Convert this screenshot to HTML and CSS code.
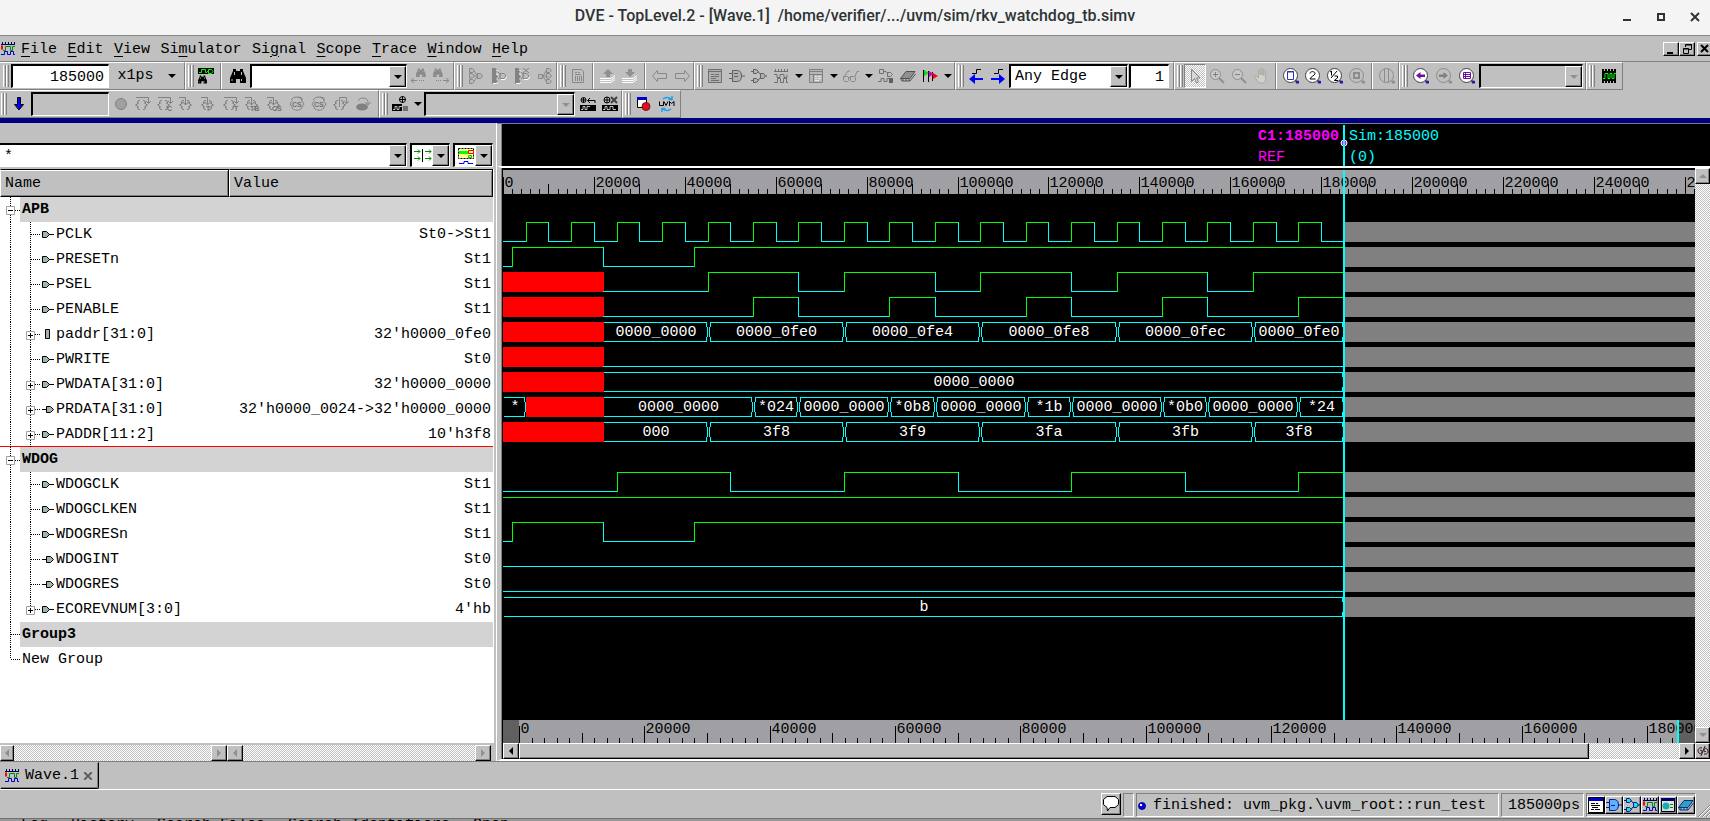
FILE: index.html
```html
<!DOCTYPE html>
<html lang="en">
<head>
<meta charset="utf-8">
<title>DVE - TopLevel.2 - [Wave.1]</title>
<link rel="stylesheet" href="styles.css">
</head>
<body>
<svg class="defs" aria-hidden="true">
  <symbol id="i-wave" viewBox="0 0 16 16"><path d="M1 3.500h14M2.500 1v2M5.500 1v2M8.500 1v2M11.500 1v2M14.500 1v2" stroke="#000050" fill="none"/><path d="M1 4.500h2v4H1z" fill="#f00"/><path d="M3 9.500h2.500v-4h5v4h2v-4h2.500" stroke="#080" fill="none"/><path d="M1 13.500h3.500v-3h3v3h3v-3h3v3H15" stroke="#00c" fill="none"/></symbol>
  <symbol id="i-findsig" viewBox="0 0 16 16"><path d="M0 0h16v6H0z" fill="#000"/><path d="M1 4.500h2.500v-3h4v3H9M9 3.500h1.500M10.500 1.500h3l1.500 2-1.500 2h-3z" stroke="#0f0" fill="none"/><use href="#p-bino" transform="translate(0 7) scale(.56)"/></symbol>
  <symbol id="p-bino" viewBox="0 0 16 16" overflow="visible"><path d="M3 1h3v2h4V1h3v2l3 7v5h-6v-4H6v4H0v-5l3-7z"/><path d="M2 11v2M11.500 11v2M4.500 4v3M11.500 4v3" stroke="#c0c0c0" fill="none"/></symbol>
  <symbol id="i-bino" viewBox="0 0 16 16"><use href="#p-bino" width="16" height="16"/></symbol>
  <symbol id="i-findl" viewBox="0 0 16 16"><use href="#p-bino" transform="translate(5 0) scale(.6)" fill="#888"/><path d="M0 12.500h6M3 10l-3 2.500 3 2.500M8 12.500h1M10 12.500h1M12 12.500h1" stroke="#888" fill="none"/></symbol>
  <symbol id="i-findr" viewBox="0 0 16 16"><use href="#p-bino" transform="translate(0 0) scale(.6)" fill="#888"/><path d="M10 12.500h6M13 10l3 2.500-3 2.500M7 12.500h1M5 12.500h1M3 12.500h1" stroke="#888" fill="none"/></symbol>
  <symbol id="i-drv" viewBox="0 0 16 16"><path d="M1.500 .5h3l2 2-2 2h-3zM1.500 5.500h3l2 2.500-2 2h-3zM1.500 11.500h3l2 2-2 2h-3zM9.500 5.500h3l2 2.500-2 2.500h-3zM6 3l3 4M6 8h3M6 13l3-4" stroke="#888" fill="#b8b8b8"/></symbol>
  <symbol id="i-load" viewBox="0 0 16 16"><path d="M1 0h3l3 2-2 3 2 3-2 3 2 3-2 2H1z" fill="#848484"/><path d="M7 4l3 3.500L7 11M9 5.500h4l2 2.500-2 2.500H9z" stroke="#888" fill="none"/><path d="M5 2l2 1M5 6l2 1M2 15.500h3l2-1M10 11.500h4l2-3" stroke="#fff" fill="none"/></symbol>
  <symbol id="i-loadx" viewBox="0 0 16 16"><use href="#i-load" width="16" height="16"/><path d="M9 0l6 5M15 0L9 5" stroke="#808080" fill="none"/></symbol>
  <symbol id="i-fan" viewBox="0 0 16 16"><path d="M9.500 .5h3l2 2-2 2h-3zM9.500 5.500h3l2 2.500-2 2h-3zM9.500 11.500h3l2 2-2 2h-3zM1.500 6.500h4v4h-4zM6 8l3-5M6 8h3M6 8l3 5" stroke="#888" fill="#b8b8b8"/></symbol>
  <symbol id="i-doc" viewBox="0 0 16 16"><path d="M2.500 1.500h9l2 2v11h-11zM5 4.500h2M8 4.500h2M5 6.500h6M5.500 8v5M7.500 8v5M9.500 8v5M11.500 8v5" stroke="#888" fill="none"/></symbol>
  <symbol id="i-up" viewBox="0 0 16 16"><path d="M8 1l5 5h-3v3H6V6H3z" fill="#909090"/><path d="M0 10.500h11l4-3M0 12.500h11l4-3M0 14.500h11l4-3" stroke="#fff" fill="none"/></symbol>
  <symbol id="i-down" viewBox="0 0 16 16"><path d="M8 9l5-5h-3V1H6v3H3z" fill="#909090"/><path d="M0 10.500h11l4-3M0 12.500h11l4-3M0 14.500h11l4-3" stroke="#fff" fill="none"/></symbol>
  <symbol id="i-back" viewBox="0 0 16 16"><path d="M.5 8l5-5.500v3h9v5h-9v3z" stroke="#888" fill="none"/></symbol>
  <symbol id="i-fwd" viewBox="0 0 16 16"><path d="M15.500 8l-5-5.500v3h-9v5h9v3z" stroke="#888" fill="none"/></symbol>
  <symbol id="i-list" viewBox="0 0 16 16"><path d="M1.500 1.500h13v13h-13z" stroke="#707070" fill="#b0b0b0"/><path d="M2 3.500h12M4 6.500h3M8 6.500h4M4 8.500h8M4 10.500h5M4 12.500h8" stroke="#707070" fill="none"/></symbol>
  <symbol id="i-and" viewBox="0 0 16 16"><path d="M3.500 2.500h5c3 0 4 3 4 5.500s-1 5.500-4 5.500h-5zM0 5.500h3M0 10.500h3M5 5.500h4M5 8.500h4M12.500 8H16" stroke="#606060" fill="#b0b0b0"/></symbol>
  <symbol id="i-sch" viewBox="0 0 16 16"><path d="M2.500 1.500h3l2 2-2 2h-3zM2.500 10.500h3l2 2-2 2h-3zM9.500 5.500h3l2 2.500-2 2.500h-3zM0 3.500h2M0 12.500h2M7 3.500l2.500 3M7 12.500l2.500-3M14 8h2" stroke="#606060" fill="#b0b0b0"/></symbol>
  <symbol id="i-gwave" viewBox="0 0 16 16"><path d="M1 3.500h14M2.500 1v2M5.500 1v2M8.500 1v2M11.500 1v2M14.500 1v2M1 6.500h3v3h3v-3h4v3h3v-3M1 14.500h3.500v-4h3v4h3v-4h3v4H15" stroke="#707070" fill="none"/></symbol>
  <symbol id="i-table" viewBox="0 0 16 16"><path d="M1.500 1.500h13v13h-13zM2 3.500h12M2 6.500h12M5.500 6v8" stroke="#808080" fill="#b8b8b8"/><path d="M7 8.500h2M10 8.500h3M7 10.500h2M10 10.500h3M7 12.500h4" stroke="#e8e8e8" fill="none"/></symbol>
  <symbol id="i-glass" viewBox="0 0 16 16"><path d="M.5 8.500h4l1 1v3l-1 1h-3l-1-1zM7.500 8.500h4l1 1v3l-1 1h-3l-1-1zM5.500 9.500h2M1.500 8l3.500-5h2M12 8.500l2-5h2" stroke="#888" fill="none"/></symbol>
  <symbol id="i-schw" viewBox="0 0 16 16"><path d="M1.500 1.500h4v4h-4zM9.500 4.500h3l2 2-2 2h-3zM6 3.500h2l2 2M0 13.500h3v-3h3v3h3v-3h3" stroke="#707070" fill="none"/><path d="M11 10h4v5h-4z" fill="#606060"/></symbol>
  <symbol id="i-chip" viewBox="0 0 16 16"><path d="M.5 10.500L6 3.500h9L10 10.500z" stroke="#505050" fill="#909090"/><path d="M.5 10.500L2 13h8l5.500-7M3 10.500V13M6 10.500V13M9 10.500V13" stroke="#505050" fill="none"/></symbol>
  <symbol id="i-flags" viewBox="0 0 16 16"><path d="M1.500 2v12M6.500 3v11M10.500 4v9" stroke="#000" fill="none"/><path d="M2 2l5 3-5 3z" fill="#0d0"/><path d="M7 3l5 3-5 3z" fill="#c0c"/><path d="M11 5l5 3-5 3z" fill="#f00"/></symbol>
  <symbol id="i-edgel" viewBox="0 0 16 16"><path d="M4 5.500h4.500v-4H13" stroke="#000" fill="none"/><path d="M1 11l6-5v4h8v2H7v4z" fill="#00f"/></symbol>
  <symbol id="i-edger" viewBox="0 0 16 16"><path d="M4 5.500h4.500v-4H13" stroke="#000" fill="none"/><path d="M15 11L9 6v4H1v2h8v4z" fill="#00f"/></symbol>
  <symbol id="i-ptr" viewBox="0 0 16 16"><path d="M4.500 1.500v12l3-3 2 4.500 2-1-2-4h3.500z" stroke="#888" fill="#d8d8d8"/></symbol>
  <symbol id="i-zin" viewBox="0 0 16 16"><circle cx="6.500" cy="6.500" r="5" stroke="#909090" fill="#c8c8c8"/><path d="M4 6.500h5M6.500 4v5" stroke="#808080"/><path d="M10 10l5 5" stroke="#909090" stroke-width="2"/></symbol>
  <symbol id="i-zout" viewBox="0 0 16 16"><circle cx="6.500" cy="6.500" r="5" stroke="#909090" fill="#c8c8c8"/><path d="M4 6.500h5" stroke="#808080"/><path d="M10 10l5 5" stroke="#909090" stroke-width="2"/></symbol>
  <symbol id="i-hand" viewBox="0 0 16 16"><path d="M5 15L1 9.500c-.8-1.500.8-2 1.600-1L4.500 10V3c0-1.300 1.700-1.300 1.700 0v4-5.500c0-1.300 1.800-1.300 1.800 0V7 2c0-1.300 1.800-1.300 1.800 0v5.500-4c0-1.300 1.800-1.300 1.800 0V11c0 2-1 3-1.600 4z" transform="translate(1)" stroke="#aaa" fill="#d4d0c8"/></symbol>
  <symbol id="p-lens" viewBox="0 0 16 16"><circle cx="7.500" cy="7.500" r="7" stroke="#404040" fill="#fff"/><path d="M12 12l4 1v2.500h-3z" fill="#2020a0"/></symbol>
  <symbol id="p-lensg" viewBox="0 0 16 16"><circle cx="7.500" cy="7.500" r="7" stroke="#8c8c8c" fill="none"/><path d="M12 12l4 1v2.500h-3z" fill="#909090"/></symbol>
  <symbol id="i-zfit" viewBox="0 0 16 16"><use href="#p-lens" width="16" height="16"/><path d="M4.500 3.500h6v8h-6zM4 4h7" stroke="#3030b0" fill="none"/></symbol>
  <symbol id="i-z2" viewBox="0 0 16 16"><use href="#p-lens" width="16" height="16"/><path d="M5 5.500c0-2.500 5-2.500 5 0C10 7.500 5 9 5 11h5.500" stroke="#000" fill="none"/></symbol>
  <symbol id="i-zhalf" viewBox="0 0 16 16"><use href="#p-lens" width="16" height="16"/><path d="M3 4l1.500-1v4.500M4 10l6-7M7.500 8h3v2l-3 2v.5h3.500" stroke="#000" fill="none"/></symbol>
  <symbol id="i-zsel" viewBox="0 0 16 16"><use href="#p-lensg" width="16" height="16"/><path d="M5 5h5v5H5z" stroke="#8c8c8c" stroke-width="2" fill="none"/></symbol>
  <symbol id="i-zcur" viewBox="0 0 16 16"><use href="#p-lensg" width="16" height="16"/><path d="M5.500 1v13M9.500 1v13" stroke="#8c8c8c" fill="none"/></symbol>
  <symbol id="i-zback" viewBox="0 0 16 16"><use href="#p-lens" width="16" height="16"/><path d="M3 7.500L7.500 4v2.500H12v2.500H7.500V11z" fill="#7010a0"/></symbol>
  <symbol id="i-zfwd" viewBox="0 0 16 16"><use href="#p-lensg" width="16" height="16"/><path d="M12 7.500L7.500 4v2.500H3v2.500h4.500V11z" fill="#808080"/></symbol>
  <symbol id="i-zlist" viewBox="0 0 16 16"><use href="#p-lens" width="16" height="16"/><path d="M4.500 4.500h7v6h-7zM4.500 6.500h7M4.500 8.500h7M6.500 4.500v6" stroke="#7010a0" fill="none"/></symbol>
  <symbol id="i-chipw" viewBox="0 0 16 16"><path d="M1 1h14v14H1z"/><path d="M3 2h11M3 14h11" stroke="#c0c0c0" stroke-width="2" stroke-dasharray="1 2"/><path d="M2 10.500h2v-5h3v5h2v-5h2v5h2v-5h2" stroke="#0f0" fill="none"/></symbol>
  <symbol id="i-darrow" viewBox="0 0 16 16"><path d="M6.500 1.500h3v7h3L8 14 3.500 8.500h3z" stroke="#000" fill="#00f"/></symbol>
  <symbol id="i-stop" viewBox="0 0 16 16"><circle cx="8" cy="8" r="5.500" stroke="#808080" fill="#a0a0a0"/></symbol>
  <symbol id="p-br" viewBox="0 0 16 16"><path d="M5 4.500H3.500L2.500 6v2l-2 1 2 1v2l1 1.500H5M8 4.500h1.500l1 1.500v2l2 1-2 1v2l-1 1.500H8" stroke="#808080" fill="none"/><path d="M3.500 5v3M3.500 10v3M9.500 5v3M9.500 10v3" stroke="#a0a0a0" fill="none"/></symbol>
  <symbol id="i-b1" viewBox="0 0 16 16"><use href="#p-br" width="16" height="16"/><path d="M1 1.500h12.500V7M11 5l2.500 2.500L16 5" stroke="#808080" fill="none"/></symbol>
  <symbol id="i-b3" viewBox="0 0 16 16"><use href="#p-br" width="16" height="16"/><path d="M0 1.500h6.500v7M4 6l2.500 3L9 6" stroke="#808080" fill="none"/></symbol>
  <symbol id="i-b8" viewBox="0 0 16 16"><path d="M3.500 4.500L1 8l2.500 4M12.500 4.500L15 8l-2.500 4M2 4c3-4 8-4 11 0M13 12c-3 3-7 3-10 0M9 1l4 1v3" stroke="#848484" fill="none"/></symbol>
  <symbol id="i-b10" viewBox="0 0 16 16"><use href="#p-br" width="16" height="16"/><path d="M6.500 11V1.500h7V7M11 5l2.500 3L16 5" stroke="#848484" fill="none"/></symbol>
  <symbol id="i-b11" viewBox="0 0 16 16"><ellipse cx="7" cy="11" rx="6" ry="3.500" fill="#808080"/><path d="M3 5c2-4 8-4 10 0v3M10 6l3 3 3-3" stroke="#848484" fill="none"/></symbol>
  <symbol id="i-mark" viewBox="0 0 16 16"><circle cx="10.500" cy="3.500" r="3" stroke="#000" fill="none"/><path d="M10.500 0v7M7 3.500h7" stroke="#000"/><path d="M0 8h10v7H0z"/><path d="M1 13.500h2v-3h2v3h2v-3h3" stroke="#c0c0c0" fill="none"/><path d="M11 10h5v5h-5z" fill="#707070"/></symbol>
  <symbol id="i-mback" viewBox="0 0 16 16"><circle cx="3.500" cy="4" r="2.500" stroke="#000" fill="none"/><path d="M1 4h5M3.500 2v5M8 4.500h7V7M10 2L7.500 4.500 10 7" stroke="#000" fill="none"/><path d="M0 9h16v6H0z"/><path d="M1 13.500h2v-3h2v3h2v-3h3" stroke="#c0c0c0" fill="none"/></symbol>
  <symbol id="i-mx" viewBox="0 0 16 16"><circle cx="5" cy="4" r="3" stroke="#000" fill="none"/><path d="M2 4h6M5 1v6" stroke="#000"/><path d="M9 1l6 6M15 1L9 7" stroke="#404040" stroke-width="2"/><path d="M0 9h16v6H0z"/><path d="M1 13.500h2v-3h2v3h3v-3h3v3h3" stroke="#c0c0c0" fill="none"/></symbol>
  <symbol id="i-rec" viewBox="0 0 16 16"><path d="M2.500 1.500h9v10h-9z" stroke="#000" fill="#fff"/><path d="M2 1h10v3H2z" fill="#00c"/><circle cx="11" cy="10.500" r="4" fill="#e01020" stroke="#801010"/></symbol>
  <symbol id="i-uvm" viewBox="0 0 16 16"><path d="M4 3c2-2 6-2 8 0M12 13c-2 2-6 2-8 0M13 0v3.500H9.500M3 16v-3.500h3.500" stroke="#18a0e8" stroke-width="1.500" fill="none"/><path d="M.5 5.500v4h4v-4M5 5.500l2 4 2-4M10.500 10V5.500l2 2 2.500-2V10" stroke="#000" fill="none"/></symbol>
  <symbol id="i-grid" viewBox="0 0 18 16"><path d="M0 3.500h6M4 1.500l2 2-2 2M0 10.500h6M4 8.500l2 2-2 2M11 3.500h6M15 1.500l2 2-2 2M11 10.500h6M15 8.500l2 2-2 2" stroke="#080" fill="none"/><path d="M8.500 1v13" stroke="#000"/></symbol>
  <symbol id="i-sigs" viewBox="0 0 16 16"><path d="M.5.500h15v10H.5z" stroke="#000" stroke-dasharray="2 1" fill="#ff8"/><path d="M1 3h10v3H1z" fill="#0f0"/><path d="M10.500 2.500h5v3h-5z" stroke="#f00" fill="none"/><path d="M10.500 7.500h3v2h-3z" stroke="#0c0" fill="none"/><path d="M1 15.500h5v-2h4v2h5" stroke="#00f" fill="none"/></symbol>
  <symbol id="i-min" viewBox="0 0 12 10"><path d="M2 8h6v2H2z"/></symbol>
  <symbol id="i-rest" viewBox="0 0 12 10"><path d="M4.500 3V.500h6v5H8M4 1h7M2.500 4.500h5v5h-5zM2 5h6" stroke="#000" fill="none"/></symbol>
  <symbol id="i-x" viewBox="0 0 12 10"><path d="M2 1l7 7M9 1L2 8" stroke="#000" stroke-width="2" fill="none"/></symbol>
  <symbol id="i-link" viewBox="0 0 12 12"><path d="M5 3C1 2 0 6 2 8s3-1 3-2-2-1-2 0M7 9c4 1 5-3 3-5S7 5 7 6s2 1 2 0M8 1L4 11" stroke="#301010" fill="none"/></symbol>
  <symbol id="i-balloon" viewBox="0 0 18 18"><path d="M5 1.500h8l3.500 3v5l-3.500 3H8L5.500 16l-.5-3.500-3.500-3v-5z" stroke="#000" fill="#fff"/></symbol>
  <symbol id="i-scons" viewBox="0 0 16 16"><path d="M.500.500h15v15H.500z" stroke="#000" fill="#fff"/><path d="M1 1h14v3H1z" fill="#00c"/><path d="M3 6.500h4M8 6.500h2M3 8.500h9M4 10.500h6M3 12.500h3M7 12.500h5" stroke="#000"/></symbol>
  <symbol id="i-sand" viewBox="0 0 16 16"><path d="M3.500 2.500h5c3 0 4 3 4 5.500s-1 5.500-4 5.500h-5zM0 5.500h3M0 10.500h3M12.500 8H16M5 8.500h4" stroke="#002090" fill="#60b0ff"/></symbol>
  <symbol id="i-ssch" viewBox="0 0 16 16"><path d="M2.500 1.500h3l2 2-2 2h-3zM2.500 10.500h3l2 2-2 2h-3zM9.500 5.500h3l2 2.500-2 2.500h-3zM0 3.500h2M0 12.500h2M7 3.500l2.500 3M7 12.500l2.500-3M14 8h2" stroke="#002090" fill="#20e0e0"/></symbol>
  <symbol id="i-stab" viewBox="0 0 16 16"><path d="M1.500 1.500h13v13h-13z" stroke="#000" fill="#e0e0e0"/><path d="M1 1h14v3H1z" fill="#006"/><circle cx="6" cy="9" r="3.500" fill="#10b0b0"/><path d="M10 7.500h3M10 10.500h3" stroke="#080"/></symbol>
  <symbol id="i-schip" viewBox="0 0 16 16"><path d="M.5 10.500L6 3.500h9L10 10.500z" stroke="#003080" fill="#30a0c0"/><path d="M.5 10.500L2 13h8l5.500-7M3 10.500V13M6 10.500V13M9 10.500V13" stroke="#003080" fill="none"/></symbol>

  <!-- tree gutter: dotted branches, expander boxes, port glyphs -->
  <symbol id="p-leaf" viewBox="0 0 56 25"><path d="M10.500 0v25M30.500 0v25M31 12.500h9" class="dots"/></symbol>
  <symbol id="p-plus" viewBox="0 0 56 25"><path d="M26.500 9.500h8v8h-8z" stroke="#a0a0a0" fill="#fff"/><path d="M28 13.500h5M30.500 11v5" stroke="#000"/></symbol>
  <symbol id="p-in" viewBox="0 0 56 25"><path d="M42.500 9.500h4l3 3-3 3h-4zM49 12.500h5" stroke="#000" fill="#a0b4a8"/></symbol>
  <symbol id="p-out" viewBox="0 0 56 25"><path d="M46.500 9.500h4l3 3-3 3h-4zM42 12.500h5" stroke="#000" fill="#a0b4a8"/></symbol>
  <symbol id="t-in" viewBox="0 0 56 25"><use href="#p-leaf" width="56" height="25"/><use href="#p-in" width="56" height="25"/></symbol>
  <symbol id="t-out" viewBox="0 0 56 25"><use href="#p-leaf" width="56" height="25"/><use href="#p-out" width="56" height="25"/></symbol>
  <symbol id="t-inp" viewBox="0 0 56 25"><use href="#t-in" width="56" height="25"/><use href="#p-plus" width="56" height="25"/></symbol>
  <symbol id="t-inlast" viewBox="0 0 56 25"><path d="M10.500 0v25M30.500 0v12M31 12.500h9" class="dots"/><use href="#p-in" width="56" height="25"/><use href="#p-plus" width="56" height="25"/></symbol>
  <symbol id="t-outp" viewBox="0 0 56 25"><use href="#t-out" width="56" height="25"/><use href="#p-plus" width="56" height="25"/></symbol>
  <symbol id="t-regp" viewBox="0 0 56 25"><use href="#p-leaf" width="56" height="25"/><use href="#p-plus" width="56" height="25"/><path d="M45.500 7.500h4v9h-4z" stroke="#000" fill="#a0b4a8"/></symbol>
  <symbol id="t-group" viewBox="0 0 20 25"><path d="M10.500 0v25M11 13.500h9" class="dots"/><path d="M6.500 9.500h8v8h-8z" stroke="#a0a0a0" fill="#fff"/><path d="M8 13.500h5" stroke="#000"/></symbol>
  <symbol id="t-empty" viewBox="0 0 20 25"><path d="M10.500 0v25M11 12.500h9" class="dots"/></symbol>
  <symbol id="t-last" viewBox="0 0 20 25"><path d="M10.500 0v12M11 12.500h9" class="dots"/></symbol>
</svg>

<header class="titlebar">
  <h1>DVE - TopLevel.2 - [Wave.1]&nbsp; /home/verifier/.../uvm/sim/rkv_watchdog_tb.simv</h1>
  <div class="winbtns">
    <button aria-label="Minimize"><svg viewBox="0 0 10 10"><path d="M1 7h8v2H1z"/></svg></button>
    <button aria-label="Maximize"><svg viewBox="0 0 10 10"><path d="M2 2h6v6H2z" stroke="#2e3436" stroke-width="2" fill="none"/></svg></button>
    <button aria-label="Close"><svg viewBox="0 0 10 10"><path d="M1 1l8 8M9 1L1 9" stroke="#2e3436" stroke-width="2"/></svg></button>
  </div>
</header>

<nav class="menubar">
  <svg class="ico"><use href="#i-wave"/></svg>
  <div class="menus">
    <button><u>F</u>ile</button><button><u>E</u>dit</button><button><u>V</u>iew</button><button>Si<u>m</u>ulator</button><button>Si<u>g</u>nal</button><button><u>S</u>cope</button><button><u>T</u>race</button><button><u>W</u>indow</button><button><u>H</u>elp</button>
  </div>
  <div class="mdi">
    <button class="bevel" aria-label="Minimize view"><svg><use href="#i-min"/></svg></button>
    <button class="bevel" aria-label="Restore view"><svg><use href="#i-rest"/></svg></button>
    <button class="bevel last" aria-label="Close view"><svg><use href="#i-x"/></svg></button>
  </div>
</nav>

<div class="toolbar">
  <div class="group g-time"><i class="grip"></i>
    <input class="field time" aria-label="Time" value="185000"><button class="unit">x1ps<b class="tri"></b></button></div>
  <div class="group g-find"><i class="grip"></i>
    <button class="tool" aria-label="Find signal"><svg class="ico"><use href="#i-findsig"/></svg></button><i class="sep"></i>
    <button class="tool w25" aria-label="Find"><svg class="ico"><use href="#i-bino"/></svg></button>
    <span class="combo find"><select aria-label="Find text"><option></option></select></span>
    <button class="tool" aria-label="Find previous"><svg class="ico"><use href="#i-findl"/></svg></button>
    <button class="tool" aria-label="Find next"><svg class="ico"><use href="#i-findr"/></svg></button></div>
  <div class="group g-trace"><i class="grip"></i>
    <button class="tool w23" aria-label="Drivers"><svg class="ico"><use href="#i-drv"/></svg></button>
    <button class="tool w23" aria-label="Loads"><svg class="ico"><use href="#i-load"/></svg></button>
    <button class="tool w23" aria-label="Clear loads"><svg class="ico"><use href="#i-loadx"/></svg></button>
    <button class="tool w23" aria-label="Fan out"><svg class="ico"><use href="#i-fan"/></svg></button></div>
  <div class="group g-nav"><i class="grip"></i>
    <button class="tool" aria-label="Source"><svg class="ico"><use href="#i-doc"/></svg></button><i class="sep"></i>
    <button class="tool" aria-label="Scope up"><svg class="ico"><use href="#i-up"/></svg></button>
    <button class="tool" aria-label="Scope down"><svg class="ico"><use href="#i-down"/></svg></button><i class="sep"></i>
    <button class="tool" aria-label="Back"><svg class="ico"><use href="#i-back"/></svg></button>
    <button class="tool" aria-label="Forward"><svg class="ico"><use href="#i-fwd"/></svg></button></div>
  <div class="group g-views"><i class="grip"></i>
    <button class="tool" aria-label="List"><svg class="ico"><use href="#i-list"/></svg></button>
    <button class="tool" aria-label="Schematic"><svg class="ico"><use href="#i-and"/></svg></button>
    <button class="tool" aria-label="Path schematic"><svg class="ico"><use href="#i-sch"/></svg></button>
    <button class="tool" aria-label="Wave"><svg class="ico"><use href="#i-gwave"/></svg></button><button class="drop" aria-label="Wave menu"><b class="tri"></b></button>
    <button class="tool" aria-label="Table"><svg class="ico"><use href="#i-table"/></svg></button><button class="drop" aria-label="Table menu"><b class="tri"></b></button>
    <button class="tool" aria-label="Watch"><svg class="ico"><use href="#i-glass"/></svg></button><button class="drop" aria-label="Watch menu"><b class="tri"></b></button>
    <button class="tool" aria-label="Schematic wave"><svg class="ico"><use href="#i-schw"/></svg></button>
    <button class="tool" aria-label="Memory"><svg class="ico"><use href="#i-chip"/></svg></button>
    <button class="tool" aria-label="Markers"><svg class="ico"><use href="#i-flags"/></svg></button><button class="drop" aria-label="Markers menu"><b class="tri"></b></button></div>
  <div class="group g-edge"><i class="grip"></i>
    <button class="tool" aria-label="Previous edge"><svg class="ico"><use href="#i-edgel"/></svg></button>
    <button class="tool" aria-label="Next edge"><svg class="ico"><use href="#i-edger"/></svg></button>
    <span class="combo edge"><select aria-label="Edge"><option>Any Edge</option></select></span>
    <input class="field count" aria-label="Edge count" value="1"></div>
  <div class="group g-zoom"><i class="grip"></i>
    <button class="tool pressed" aria-label="Select"><svg class="ico"><use href="#i-ptr"/></svg></button>
    <button class="tool" aria-label="Zoom in"><svg class="ico"><use href="#i-zin"/></svg></button>
    <button class="tool" aria-label="Zoom out"><svg class="ico"><use href="#i-zout"/></svg></button>
    <button class="tool" aria-label="Pan"><svg class="ico"><use href="#i-hand"/></svg></button><i class="sep"></i>
    <button class="tool" aria-label="Zoom fit"><svg class="ico"><use href="#i-zfit"/></svg></button>
    <button class="tool" aria-label="Zoom 2x"><svg class="ico"><use href="#i-z2"/></svg></button>
    <button class="tool" aria-label="Zoom half"><svg class="ico"><use href="#i-zhalf"/></svg></button>
    <button class="tool" aria-label="Zoom selection"><svg class="ico"><use href="#i-zsel"/></svg></button><i class="sep"></i>
    <button class="tool" aria-label="Zoom cursors"><svg class="ico"><use href="#i-zcur"/></svg></button></div>
  <div class="group g-hist"><i class="grip"></i>
    <button class="tool w23" aria-label="Zoom back"><svg class="ico"><use href="#i-zback"/></svg></button>
    <button class="tool w23" aria-label="Zoom forward"><svg class="ico"><use href="#i-zfwd"/></svg></button>
    <button class="tool w23" aria-label="Zoom list"><svg class="ico"><use href="#i-zlist"/></svg></button>
    <span class="combo off hist"><select aria-label="Zoom history" disabled><option></option></select></span></div>
  <div class="group g-one"><i class="grip"></i>
    <button class="tool w25" aria-label="Wave chip"><svg class="ico"><use href="#i-chipw"/></svg></button></div>
</div>

<div class="toolbar">
  <div class="group g-sim"><i class="grip"></i>
    <button class="tool" aria-label="Continue"><svg class="ico"><use href="#i-darrow"/></svg></button>
    <input class="field step" aria-label="Run time" disabled>
    <button class="tool" aria-label="Stop"><svg class="ico"><use href="#i-stop"/></svg></button>
    <button class="tool" aria-label="Step over"><svg class="ico"><use href="#i-b1"/></svg></button>
    <button class="tool" aria-label="Step over C"><svg class="ico"><use href="#i-b1"/><text x="10" y="15" class="tiny">C</text></svg></button>
    <button class="tool" aria-label="Step"><svg class="ico"><use href="#i-b3"/></svg></button>
    <button class="tool" aria-label="Step thread"><svg class="ico"><use href="#i-b3"/><text x="5" y="15" class="tiny">T</text></svg></button>
    <button class="tool" aria-label="Next thread"><svg class="ico"><use href="#i-b1"/><text x="11" y="15" class="tiny">T</text></svg></button>
    <button class="tool" aria-label="Step testbench"><svg class="ico"><use href="#i-b3"/><text x="5" y="15" class="tiny">TB</text></svg></button>
    <button class="tool" aria-label="Step constraint"><svg class="ico"><use href="#i-b3"/><text x="5" y="15" class="tiny">CS</text></svg></button>
    <button class="tool" aria-label="Loop constraint"><svg class="ico"><use href="#i-b8"/><text x="3" y="11" class="tiny">CS</text></svg></button>
    <button class="tool" aria-label="Loop all"><svg class="ico"><use href="#i-b8"/><text x="3" y="11" class="tiny">CS</text></svg></button>
    <button class="tool" aria-label="Step out"><svg class="ico"><use href="#i-b10"/></svg></button>
    <button class="tool" aria-label="Skip"><svg class="ico"><use href="#i-b11"/></svg></button></div>
  <div class="group g-sess"><i class="grip"></i>
    <button class="tool" aria-label="Marker search"><svg class="ico"><use href="#i-mark"/></svg></button><button class="drop" aria-label="Marker search menu"><b class="tri"></b></button>
    <span class="combo off sess"><select aria-label="Search" disabled><option></option></select></span>
    <button class="tool" aria-label="Back to mark"><svg class="ico"><use href="#i-mback"/></svg></button>
    <button class="tool" aria-label="Clear mark"><svg class="ico"><use href="#i-mx"/></svg></button></div>
  <div class="group g-uvm"><i class="grip"></i>
    <button class="tool" aria-label="Record"><svg class="ico"><use href="#i-rec"/></svg></button>
    <button class="tool w25" aria-label="UVM"><svg class="ico"><use href="#i-uvm"/></svg></button></div>
</div>

<main class="work">
  <section class="signals">
    <div class="filter">
      <span class="combo name"><select aria-label="Filter"><option>*</option></select></span>
      <span class="combo pick"><select aria-label="Direction"><option></option></select><svg class="pic"><use href="#i-grid"/></svg></span>
      <span class="combo pick"><select aria-label="Signal type"><option></option></select><svg class="pic"><use href="#i-sigs"/></svg></span>
    </div>
    <div class="treebox">
      <table>
        <thead><tr><th>Name</th><th>Value</th></tr></thead>
        <tbody>
          <tr class="grp"><td colspan="2"><svg><use href="#t-group"/></svg><b>APB</b></td></tr>
          <tr><td><svg><use href="#t-in"/></svg>PCLK</td><td>St0-&gt;St1</td></tr>
          <tr><td><svg><use href="#t-in"/></svg>PRESETn</td><td>St1</td></tr>
          <tr><td><svg><use href="#t-in"/></svg>PSEL</td><td>St1</td></tr>
          <tr><td><svg><use href="#t-in"/></svg>PENABLE</td><td>St1</td></tr>
          <tr><td><svg><use href="#t-regp"/></svg>paddr[31:0]</td><td>32'h0000_0fe0</td></tr>
          <tr><td><svg><use href="#t-in"/></svg>PWRITE</td><td>St0</td></tr>
          <tr><td><svg><use href="#t-inp"/></svg>PWDATA[31:0]</td><td>32'h0000_0000</td></tr>
          <tr><td><svg><use href="#t-outp"/></svg>PRDATA[31:0]</td><td>32'h0000_0024-&gt;32'h0000_0000</td></tr>
          <tr class="mark"><td><svg><use href="#t-inp"/></svg>PADDR[11:2]</td><td>10'h3f8</td></tr>
          <tr class="grp"><td colspan="2"><svg><use href="#t-group"/></svg><b>WDOG</b></td></tr>
          <tr><td><svg><use href="#t-in"/></svg>WDOGCLK</td><td>St1</td></tr>
          <tr><td><svg><use href="#t-in"/></svg>WDOGCLKEN</td><td>St1</td></tr>
          <tr><td><svg><use href="#t-in"/></svg>WDOGRESn</td><td>St1</td></tr>
          <tr><td><svg><use href="#t-out"/></svg>WDOGINT</td><td>St0</td></tr>
          <tr><td><svg><use href="#t-out"/></svg>WDOGRES</td><td>St0</td></tr>
          <tr><td><svg><use href="#t-inlast"/></svg>ECOREVNUM[3:0]</td><td>4'hb</td></tr>
          <tr class="grp"><td colspan="2"><svg><use href="#t-empty"/></svg><b>Group3</b></td></tr>
          <tr class="grp plain"><td colspan="2"><svg><use href="#t-last"/></svg><b>New Group</b></td></tr>
        </tbody>
      </table>
    </div>
    <div class="hscrolls">
      <div class="hscroll s1"><button class="bevel off" aria-label="Names left"><b class="al"></b></button><i class="track"></i><button class="bevel off" aria-label="Names right"><b class="ar"></b></button></div>
      <div class="hscroll s2"><button class="bevel off" aria-label="Values left"><b class="al"></b></button><i class="track"></i><button class="bevel off" aria-label="Values right"><b class="ar"></b></button></div>
    </div>
  </section>

  <section class="waves">
    <svg class="markers" id="markers"></svg>
    <div class="plot">
      <div class="canvas">
        <svg class="ruler" id="ruler"></svg>
        <svg class="traces" id="traces"></svg>
        <svg class="overview" id="overview"></svg>
        <div class="hscroll"><button class="bevel" aria-label="Scroll left"><b class="al"></b></button><i class="thumb"></i><i class="track"></i><button class="bevel" aria-label="Scroll right"><b class="ar"></b></button></div>
      </div>
      <div class="vscroll"><button class="bevel off" aria-label="Scroll up"><b class="au"></b></button><i class="track"></i><button class="bevel off" aria-label="Scroll down"><b class="ad"></b></button><button class="bevel link" aria-label="Link"><svg><use href="#i-link"/></svg></button></div>
    </div>
  </section>
</main>

<div class="tabs"><button class="tab"><svg class="ico"><use href="#i-wave"/></svg>Wave.1<svg class="close" viewBox="0 0 8 8"><path d="M0 0l8 8M8 0L0 8" stroke="#606060" stroke-width="2"/></svg></button></div>

<footer class="status">
  <button class="bevel talk" aria-label="Messages"><svg class="ico"><use href="#i-balloon"/></svg></button>
  <span class="cell blank"></span>
  <span class="cell msg"><i class="dot"></i>finished: uvm_pkg.\uvm_root::run_test</span>
  <span class="cell now">185000ps</span>
  <span class="cell icons">
    <button class="bevel" aria-label="Console"><svg class="ico"><use href="#i-scons"/></svg></button><button class="bevel" aria-label="Schematics"><svg class="ico"><use href="#i-sand"/></svg></button><button class="bevel" aria-label="Paths"><svg class="ico"><use href="#i-ssch"/></svg></button><button class="bevel" aria-label="Waves"><svg class="ico"><use href="#i-wave"/></svg></button><button class="bevel" aria-label="Lists"><svg class="ico"><use href="#i-stab"/></svg></button><button class="bevel" aria-label="Memories"><svg class="ico"><use href="#i-schip"/></svg></button>
  </span>
  <svg class="sizer" viewBox="0 0 12 12"><path d="M0 12L12 0M4 12l8-8M8 12l4-4" stroke="#808080"/><path d="M1 12L12 1M5 12l7-7M9 12l3-3" stroke="#fff"/></svg>
</footer>
<div class="beneath"><span>Log</span><span>History</span><span>Search Files</span><span>Search Identifiers</span><span>Open</span></div>

<script src="waves.js"></script>
</body>
</html>
```
FILE: styles.css
```css
* { box-sizing: border-box; }
html, body { height: 100%; }
body {
  margin: 0;
  display: flex;
  flex-direction: column;
  overflow: hidden;
  background: #c0c0c0;
  color: #000;
  font: 15px/18px "Liberation Mono", monospace;
}
button, input, select { font: inherit; color: inherit; border-radius: 0; margin: 0; padding: 0; }
button { border: 0; background: none; display: flex; align-items: center; justify-content: center; }
i { font-style: normal; }
.defs { position: absolute; width: 0; height: 0; }
.ico { width: 16px; height: 16px; flex: none; display: block; }
.dots { stroke: #000; stroke-dasharray: 1 1; fill: none; }
.tiny { font: bold 7px "Liberation Sans", sans-serif; fill: #707070; }

.titlebar {
  flex: none; height: 36px; display: grid; grid-template-columns: 1fr auto 1fr;
  align-items: start; background: #f4f4f4; border-bottom: 1px solid #888;
}
.titlebar h1 { grid-column: 2; margin: 0; color: #2e3436; font: 500 16px/32px Roboto, "Noto Sans", sans-serif; white-space: pre; }
.winbtns { justify-self: end; display: flex; gap: 24px; padding: 12px 10px 0 0; }
.winbtns svg { width: 10px; height: 10px; fill: #2e3436; }

.menubar { flex: none; height: 26px; display: flex; align-items: center; border-bottom: 1px solid #808080; }
.menubar > .ico { margin-right: 5px; }
.menus { display: flex; justify-content: space-between; width: 507px; padding-top: 2px; }
.menus u { text-underline-offset: 3px; }
.mdi { display: flex; margin-left: auto; margin-right: -3px; }
.mdi button { width: 16px; height: 14px; }
.mdi .last { margin-left: 2px; }
.mdi svg { width: 12px; height: 10px; }

.bevel { background: #c0c0c0; border: 1px solid; border-color: #fff #000 #000 #fff; box-shadow: inset -1px -1px #808080; }

.toolbar { flex: none; display: flex; height: 28px; }
.group { display: flex; align-items: center; flex: none; border: 1px solid; border-color: #fff #808080 #808080 #fff; padding-left: 2px; }
.grip { width: 7px; height: 22px; flex: none; background: linear-gradient(90deg, #fff 1px, #c0c0c0 1px 2px, #808080 2px 3px, #fff 3px 4px, #c0c0c0 4px 5px, #808080 5px 6px, transparent 6px); }
.sep { width: 2px; height: 26px; margin: 0 3px; border-left: 1px solid #808080; border-right: 1px solid #fff; flex: none; }
.tool { width: 22px; height: 24px; flex: none; }
.w23 { width: 23px; }
.w25 { width: 25px; }
.drop { width: 13px; height: 24px; flex: none; }
.tri { width: 0; height: 0; border: 4px solid transparent; border-top-color: #000; border-bottom: 0; }
.pressed { border: 1px solid; border-color: #808080 #fff #fff #808080; background: repeating-conic-gradient(#c0c0c0 0 25%, #fff 0 50%) 0 0 / 2px 2px; }
.g-time { width: 185px; border-left: 0; padding-left: 3px; }
.g-find { width: 269px; }
.g-trace { width: 103px; }
.g-nav { width: 137px; }
.g-views { width: 261px; }
.g-edge { width: 219px; }
.g-zoom { width: 225px; }
.g-hist { width: 187px; }
.g-one { width: 37px; }
.g-sim { width: 379px; border-left: 0; padding-left: 1px; }
.g-sess { width: 243px; }
.g-uvm { width: 59px; }

.field { height: 24px; border: solid; border-color: #000 #fff #fff #000; border-width: 2px 1px 1px 2px; background: #fff; text-align: right; padding: 1px 4px 0 3px; }
.field:disabled { background: #c0c0c0; }
.time { width: 98px; margin-left: 1px; }
.count { width: 40px; margin-left: 1px; }
.step { width: 78px; margin: 0 1px; }
.unit { flex: 1; gap: 14px; }

.combo { position: relative; display: block; height: 24px; border: solid; border-color: #000 #fff #fff #000; border-width: 2px 1px 1px 2px; background: #fff; flex: none; }
.combo select { display: block; width: 100%; height: 100%; border: 0; background: none; appearance: none; padding-left: 4px; outline: 0; opacity: 1; }
.combo::before { content: ""; position: absolute; top: 0; right: 0; bottom: 0; width: 15px; background: #c0c0c0; border: 1px solid; border-color: #fff #000 #000 #fff; box-shadow: inset -1px -1px #808080; pointer-events: none; }
.combo::after { content: ""; position: absolute; top: 9px; right: 4px; border: 4px solid transparent; border-top-color: #000; border-bottom: 0; pointer-events: none; }
.combo.off { background: #c0c0c0; }
.combo.off::after { border-top-color: #909090; }
.find { width: 157px; margin-right: 1px; }
.edge { width: 119px; }
.hist { width: 104px; margin-left: 1px; }
.sess { width: 151px; margin-right: 2px; }

.work { flex: 1; min-height: 0; display: flex; border-top: 5px solid #000080; border-bottom: 1px solid #808080; }
.signals { width: 496px; flex: none; display: flex; flex-direction: column; padding-top: 20px; }
.filter { display: flex; gap: 3px; flex: none; padding-right: 3px; }
.filter .name { flex: 1; border-left: 0; }
.filter .name select { padding-top: 2px; }
.pick { width: 40px; }
.pic { position: absolute; left: 2px; top: 3px; width: 18px; height: 16px; pointer-events: none; }
.treebox { flex: 1; min-height: 0; margin: 2px 1px 0 0; overflow: hidden; background: #fff; border-right: 1px solid #c0c0c0; padding-right: 1px; }
table { width: 100%; border-collapse: separate; border-spacing: 0; table-layout: fixed; }
th { height: 28px; padding: 2px 0 0 4px; text-align: left; font-weight: normal; background: #c0c0c0; border: 1px solid; border-color: #000 #000 #000 #fff; box-shadow: inset 0 1px #fff, inset -1px -1px #808080; }
th:first-child { width: 229px; }
td { height: 25px; padding: 0; line-height: 25px; white-space: nowrap; }
td svg { width: 56px; height: 25px; float: left; }
td:nth-child(2) { text-align: right; padding-right: 2px; }
.grp td { background: linear-gradient(90deg, #fff 20px, #d3d3d3 20px); }
.grp td svg { width: 20px; margin-right: 2px; }
.plain td { background: none; }
.plain b { font-weight: normal; }
.mark td { box-shadow: inset 0 -1px #f00; }

.hscroll { display: flex; height: 16px; }
.hscroll button { width: 16px; height: 16px; flex: none; }
.hscrolls { display: flex; height: 18px; padding-top: 2px; flex: none; }
.s1 { width: 227px; }
.s1 button:first-child { width: 14px; }
.s2 { width: 264px; }
.track { flex: 1; background: repeating-conic-gradient(#c0c0c0 0 25%, #fff 0 50%) 0 0 / 2px 2px; }
.al, .ar, .au, .ad { width: 0; height: 0; border: 4px solid transparent; }
.al { border-right-color: #000; border-left: 0; }
.ar { border-left-color: #000; border-right: 0; }
.au { border-bottom-color: #000; border-top: 0; }
.ad { border-top-color: #000; border-bottom: 0; }
.off .al { border-right-color: #909090; }
.off .ar { border-left-color: #909090; }
.off .au { border-bottom-color: #909090; }
.off .ad { border-top-color: #909090; }

.waves { flex: 1; min-width: 0; display: flex; flex-direction: column; border-left: 1px solid #fff; }
.waves::before { content: ""; height: 1px; flex: none; background: #808080; }
.markers { display: block; width: 100%; height: 42px; flex: none; background: #000; }
.plot { flex: 1; min-height: 0; display: flex; border-top: 2px solid #fff; border-bottom: 2px solid #fff; }
.markers, .plot { border-left: 4px solid #c0c0c0; box-shadow: inset 1px 0 #808080, inset 2px 0 #000; padding-left: 2px; }
.canvas { flex: 1; min-width: 0; display: flex; flex-direction: column; }
.canvas svg { display: block; width: 100%; }
.ruler { height: 26px; flex: none; background: #a0a0a4; border-top: 2px solid #000; }
.traces { flex: 1; min-height: 0; background: #000; }
.overview { height: 23px; flex: none; background: #a0a0a4; }
.thumb { background: #c0c0c0; border: 1px solid; border-color: #fff #000 #000 #fff; box-shadow: inset -1px -1px #808080; }
.canvas .track { flex: 5 1 0; }
.canvas .thumb { flex: 59 1 0; }
.vscroll { width: 15px; flex: none; display: flex; flex-direction: column; }
.vscroll button { height: 16px; flex: none; }
.vscroll svg { width: 12px; height: 12px; }
.markers text { fill: #0ff; }
.markers .c1, .markers .ref { fill: #f0f; }
.markers .c1 { font-weight: bold; }
.traces text { fill: #fff; text-anchor: middle; }
.traces path, .ruler path, .overview path { fill: none; shape-rendering: crispEdges; }
.hi { stroke: #0f0; }
.lo { stroke: #0ff; }
.tick { stroke: #000; }
.cursor { fill: #0ff; }

.tabs { flex: none; height: 28px; border-bottom: 1px solid #fff; }
.tab { width: 99px; height: 27px; gap: 5px; padding-right: 3px; border: 1px solid; border-color: #c0c0c0 #000 #000 #c0c0c0; box-shadow: inset -1px -1px #808080; border-bottom-right-radius: 2px; }
.close { width: 8px; height: 8px; }

.status { flex: none; height: 29px; padding: 3px 0 1px; display: flex; justify-content: flex-end; gap: 2px; border-bottom: 1px solid #707070; }
.cell { border: 1px solid; border-color: #808080 #fff #fff #808080; display: flex; align-items: center; white-space: pre; padding-top: 1px; }
.talk { width: 20px; height: 22px; }
.talk .ico { width: 18px; height: 18px; }
.blank { width: 11px; }
.msg { width: 363px; gap: 7px; padding-left: 1px; }
.dot { width: 8px; height: 8px; border-radius: 50%; background: radial-gradient(circle at 2px 2px, #fff 1px, #00f 1px); border: 1px solid #000080; }
.now { width: 83px; justify-content: flex-end; padding-right: 3px; }
.icons { width: 110px; padding: 0; }
.icons .bevel { width: 18px; height: 18px; }
.sizer { width: 12px; height: 12px; align-self: flex-end; }
.beneath { flex: none; height: 2px; overflow: hidden; background: #989898; display: flex; gap: 23px; padding-left: 21px; white-space: pre; line-height: 12px; }
```
FILE: waves.js
```js
const PX = 90.9 / 20000;      // main view, pixels per time unit
const OPX = 125.33 / 20000;   // overview strip
const END = 185000;
const X = t => Math.round(t * PX);

// Time ruler: labelled major ticks, half ticks and minor ticks.
function ruler(scale, x0, base, rise, limit) {
  let d = '', labels = '';
  for (let t = 0; t <= limit; t += 2000) {
    const x = x0 + Math.round(t * scale) + 0.5;
    const len = t % 20000 === 0 ? 17 : t % 10000 === 0 ? 10 : 5;
    d += `M${x} ${base}v-${len}`;
    if (len === 17) labels += `<text x="${x + 1}" y="${base - rise}">${t}</text>`;
  }
  return `<path class="tick" d="${d}"/>${labels}`;
}

// Single-bit trace; edges toggle the level, starting at t0 with the given level.
function bit(y, t0, level, edges) {
  const hi = y + 0.5, lo = y + 19.5;
  let out = '', from = t0;
  for (const t of [...edges, END]) {
    const ly = level ? hi : lo;
    out += `<path class="${level ? 'hi' : 'lo'}" d="M${X(from)} ${ly}H${X(t) + 1}"/>`;
    if (t !== END) out += `<path class="${level ? 'lo' : 'hi'}" d="M${X(t) + 0.5} ${y}V${y + 20}"/>`;
    level = !level;
    from = t;
  }
  return out;
}

function unknown(y, a, b) {
  return `<rect x="${X(a)}" y="${y}" width="${X(b) - X(a) + 1}" height="20" fill="#f00"/>`;
}

function bus(y, t0, parts) {
  const h = y + 0.5, l = y + 19.5;
  let out = '', from = t0;
  for (const [to, text] of parts) {
    const a = X(from) + 0.5, b = X(to) + 0.5;
    const left = from === t0
      ? `H${a}M${a} ${l}`
      : `H${a + 2}V${y + 3}L${a + 1} ${y + 7}V${y + 13}L${a + 2} ${y + 17}V${l}`;
    out += `<path class="lo" d="M${b - 1} ${y + 10}V${y + 7}L${b - 2} ${y + 3}V${h}${left}H${b - 2}V${y + 17}L${b - 1} ${y + 13}V${y + 10}"/>`;
    out += `<text x="${(a + b) / 2}" y="${y + 14}">${text}</text>`;
    from = to;
  }
  return out;
}

const every = (start, step) => { const e = []; for (let t = start; t < END; t += step) e.push(t); return e; };
const Z = '0000_0000';
const addr = v => [45, 75, 105, 135, 165, 185].map((t, i) => [t * 1000, v[i]]);
const row = i => 28 + 25 * i;
const K = list => list.map(n => n * 1000);

let traces = '';
for (const i of [0, 1, 2, 3, 4, 5, 6, 7, 8, 10, 11, 12, 13, 14, 15])
  traces += `<rect x="${X(END) + 1}" y="${row(i)}" width="4000" height="20" fill="#808080"/>`;
for (const i of [2, 3, 4, 5, 6, 8]) traces += unknown(row(i), 0, 22000);
traces += unknown(row(7), 5000, 22000);
traces += bit(row(0), 0, false, every(5000, 5000));
traces += bit(row(1), 0, false, K([2, 22, 42]));
traces += bit(row(2), 22000, false, K([45, 65, 75, 95, 105, 125, 135, 155, 165]));
traces += bit(row(3), 22000, false, K([55, 65, 85, 95, 115, 125, 145, 155, 175]));
traces += bus(row(4), 22000, addr([Z, '0000_0fe0', '0000_0fe4', '0000_0fe8', '0000_0fec', '0000_0fe0']));
traces += bit(row(5), 22000, false, []);
traces += bus(row(6), 22000, [[END, Z]]);
traces += bus(row(7), 0, [[5000, '*']]);
traces += bus(row(7), 22000, [[55, Z], [65, '*024'], [85, Z], [95, '*0b8'], [115, Z], [125, '*1b'], [145, Z], [155, '*0b0'], [175, Z], [185, '*24']].map(([t, s]) => [t * 1000, s]));
traces += bus(row(8), 22000, addr(['000', '3f8', '3f9', '3fa', '3fb', '3f8']));
traces += bit(row(10), 0, false, every(25000, 25000));
traces += bit(row(11), 0, true, []);
traces += bit(row(12), 0, false, K([2, 22, 42]));
traces += bit(row(13), 0, false, []);
traces += bit(row(14), 0, false, []);
traces += bus(row(15), 0, [[END, 'b']]);

const cx = X(END) - 1;
const cursor = h => `<rect class="cursor" x="${cx}" y="0" width="2" height="${h}"/>`;
const rulerEl = document.getElementById('ruler');
function drawRuler() {
  const visible = rulerEl.getBoundingClientRect().width / PX;
  rulerEl.innerHTML = ruler(PX, 0, 24, 7, visible) + cursor('100%');
}
drawRuler();
window.addEventListener('resize', drawRuler);

document.getElementById('traces').innerHTML = traces + cursor('100%');
document.getElementById('overview').innerHTML =
  '<rect width="16" height="23" fill="#606060"/>' +
  `<rect x="${16 + Math.round(END * OPX)}" width="4000" height="23" fill="#606060"/>` +
  ruler(OPX, 16, 23, 10, 184000) +
  `<rect class="cursor" x="${15 + Math.round(END * OPX)}" width="2" height="23"/>`;
document.getElementById('markers').innerHTML =
  `<rect class="cursor" x="${cx}" y="1" width="2" height="41"/>` +
  `<circle cx="${cx + 1}" cy="19" r="3" fill="#f0f" stroke="#fff"/>` +
  `<rect class="cursor" x="${cx}" y="15" width="2" height="8"/>` +
  `<text class="c1" x="${cx - 85}" y="16">C1:185000</text><text class="ref" x="${cx - 85}" y="37">REF</text>` +
  `<text x="${cx + 6}" y="16">Sim:185000</text><text x="${cx + 6}" y="37">(0)</text>`;
```
